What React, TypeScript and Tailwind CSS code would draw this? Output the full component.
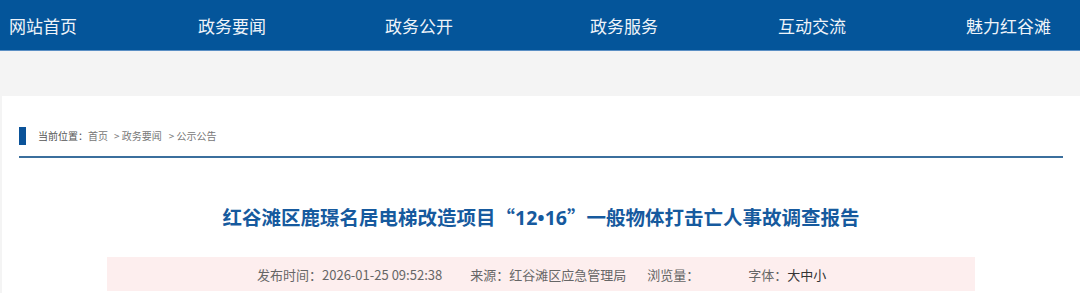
import React from "react";

const font = { fontFamily: '"Noto Sans CJK SC", "Noto Sans", sans-serif' };

export default function App() {
  return (
    <div className="w-[1080px] h-[293px] overflow-hidden bg-[#f4f4f4] font-['Noto_Sans_CJK_SC',sans-serif]" style={font}>
      <nav className="h-[51px] bg-[#04559a] border-b border-[#5b8fc4] flex items-center pl-[9px] text-[17px] text-[#eef3f9] leading-none">
        <span>网站首页</span>
        <span className="ml-[121px]">政务要闻</span>
        <span className="ml-[119px]">政务公开</span>
        <span className="ml-[137px]">政务服务</span>
        <span className="ml-[120px]">互动交流</span>
        <span className="ml-[120px]">魅力红谷滩</span>
      </nav>
      <div className="h-[45px]" />
      <div className="ml-[2px] bg-white h-[200px] pt-[31px]">
        <div className="pl-[17px] pr-[17px]">
          <div className="flex items-center h-[18px]">
            <div className="w-[7px] h-[18px] bg-[#0b5399]" />
            <div className="ml-[12px] text-[10px] text-[#777] flex items-center leading-none">
              <span className="text-[#555]">当前位置：</span>
              <span>首页</span>
              <span className="ml-[6px]">&gt; 政务要闻</span>
              <span className="ml-[7px]">&gt; 公示公告</span>
            </div>
          </div>
          <div className="mt-[11px] h-[2px] bg-[#3b6f9d]" />
        </div>
        <h1 className="mt-[45px] text-center text-[19.5px] leading-[28px] font-bold text-[#165a9e]">
          红谷滩区鹿璟名居电梯改造项目“<span className="font-['Noto_Sans',sans-serif]">12•16</span>”一般物体打击亡人事故调查报告
        </h1>
        <div className="mt-[25px] ml-[105px] w-[868px] h-[34px] bg-[#fdeeee] flex items-center pl-[150px] text-[13px] text-[#666] leading-none">
          <span>发布时间：2026-01-25 09:52:38</span>
          <span className="ml-[28px]">来源：红谷滩区应急管理局</span>
          <span className="ml-[21px]">浏览量：</span>
          <span className="ml-[49px]">字体：</span>
          <span className="text-[#333]">大中小</span>
        </div>
      </div>
    </div>
  );
}
